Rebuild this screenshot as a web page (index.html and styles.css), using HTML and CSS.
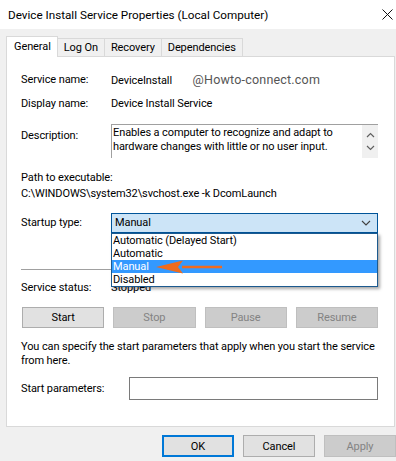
FILE: index.html
```html
<!DOCTYPE html>
<html lang="en">
<head>
    <meta charset="UTF-8">
    <meta name="viewport" content="width=device-width, initial-scale=1.0">
    <title>Device Install Service Properties (Local Computer)</title>
    <link rel="stylesheet" href="styles.css">
</head>
<body>
    <div class="window">
        <div class="titlebar">
            <span class="title">Device Install Service Properties (Local Computer)</span>
            <svg class="close" width="11" height="11" viewBox="0 0 11 11">
                <path d="M0.5 0.5 L10.5 10.5 M10.5 0.5 L0.5 10.5" stroke="#111" stroke-width="1" fill="none"/>
            </svg>
        </div>

        <div class="tabs">
            <div class="tab active">General</div>
            <div class="tab">Log On</div>
            <div class="tab">Recovery</div>
            <div class="tab">Dependencies</div>
        </div>

        <div class="panel">
            <div class="row first">
                <span class="label">Service name:</span>
                <span class="value">DeviceInstall <span class="watermark">@Howto-connect.com</span></span>
            </div>
            <div class="row">
                <span class="label">Display name:</span>
                <span class="value">Device Install Service</span>
            </div>
            <div class="row desc-row">
                <span class="label">Description:</span>
                <div class="desc-box">
                    <div class="desc-text">Enables a computer to recognize and adapt to hardware changes with little or no user input.</div>
                    <div class="scrollbar">
                        <svg width="9" height="6" viewBox="0 0 9 6"><path d="M1 5 L4.5 1.5 L8 5" stroke="#606060" stroke-width="1.2" fill="none"/></svg>
                        <svg width="9" height="6" viewBox="0 0 9 6"><path d="M1 1 L4.5 4.5 L8 1" stroke="#606060" stroke-width="1.2" fill="none"/></svg>
                    </div>
                </div>
            </div>
            <div class="path-label">Path to executable:</div>
            <div class="path-value">C:\WINDOWS\system32\svchost.exe -k DcomLaunch</div>

            <div class="row startup-row">
                <span class="label">Startup type:</span>
                <div class="combo">
                    <span>Manual</span>
                    <svg width="10" height="6" viewBox="0 0 10 6"><path d="M1 1 L5 5 L9 1" stroke="#404040" stroke-width="1.1" fill="none"/></svg>
                    <ul class="combo-list">
                        <li>Automatic (Delayed Start)</li>
                        <li>Automatic</li>
                        <li class="selected">Manual</li>
                        <li>Disabled</li>
                    </ul>
                    <svg class="pointer" width="68" height="14" viewBox="0 0 68 14">
                        <path d="M26 7 L66 7" stroke="#ee6b1f" stroke-width="2.5"/>
                        <path d="M0 7 L27 0.5 L22 7 L27 13.5 Z" fill="#ee6b1f"/>
                    </svg>
                </div>
            </div>

            <hr class="separator">

            <div class="row status-row">
                <span class="label">Service status:</span>
                <span class="value">Stopped</span>
            </div>

            <div class="service-buttons">
                <button class="btn">Start</button>
                <button class="btn" disabled>Stop</button>
                <button class="btn" disabled>Pause</button>
                <button class="btn" disabled>Resume</button>
            </div>

            <p class="hint">You can specify the start parameters that apply when you start the service from here.</p>

            <div class="params-row">
                <span class="label">Start parameters:</span>
                <div class="params-input"></div>
            </div>
        </div>

        <div class="actions">
            <button class="btn dlg default">OK</button>
            <button class="btn dlg">Cancel</button>
            <button class="btn dlg" disabled>Apply</button>
        </div>
    </div>
</body>
</html>
```

FILE: styles.css
```css
* {
    margin: 0;
    padding: 0;
    box-sizing: border-box;
}

html, body {
    overflow: hidden;
}

body {
    font-family: Roboto, 'Noto Sans', sans-serif;
    font-size: 11px;
    letter-spacing: -0.1px;
    color: #000;
    background: #f0f0f0;
}

.window {
    width: 402px;
    height: 461px;
    background: #f0f0f0;
}

.titlebar {
    height: 29px;
    background: #fff;
    display: flex;
    align-items: center;
    justify-content: space-between;
    padding: 0 9px 0 8px;
}

.title {
    font-size: 11.7px;
    letter-spacing: 0;
}

/* tabs */
.tabs {
    display: flex;
    align-items: flex-end;
    padding: 7px 0 0 6px;
    height: 27px;
    position: relative;
    z-index: 1;
}

.tab {
    height: 18px;
    padding: 0 6px;
    border: 1px solid #d9d9d9;
    border-bottom: none;
    border-left: none;
    line-height: 17px;
    background: #f0f0f0;
}

.tab.active {
    height: 21px;
    margin-bottom: -1px;
    background: #fff;
    border-left: 1px solid #d9d9d9;
    padding: 0 6px 0 7px;
    line-height: 19px;
}

/* panel */
.panel {
    margin: 0 7px 0 6px;
    height: 371px;
    background: #fff;
    border: 1px solid #d9d9d9;
    padding: 15px 16px 0 14px;
}

.row {
    display: flex;
    align-items: flex-start;
    line-height: 16px;
}

.row + .row {
    margin-top: 7px;
}

.label {
    width: 90px;
    flex-shrink: 0;
}

.value {
    white-space: nowrap;
}

.watermark {
    color: #555;
    margin-left: 18px;
    font-size: 12.5px;
    letter-spacing: 0.2px;
}

.desc-row.row {
    margin-top: 12px;
}

.desc-row .label {
    padding-top: 4px;
}

.desc-box {
    flex: 1;
    height: 34px;
    display: flex;
    border-top: 1px solid #a0a0a0;
    border-left: 1px solid #a0a0a0;
}

.desc-text {
    flex: 1;
    line-height: 14px;
    padding: 1px 0 0 1px;
}

.scrollbar {
    width: 16px;
    background: #f0f0f0;
    display: flex;
    flex-direction: column;
    align-items: center;
    justify-content: space-around;
    padding: 3px 0;
}

.path-label {
    margin-top: 12px;
    line-height: 16px;
}

.path-value {
    line-height: 16px;
}

.startup-row.row {
    margin-top: 11px;
}

.startup-row .label {
    padding-top: 2px;
}

.combo {
    flex: 1;
    height: 20px;
    position: relative;
    background: #cce4f7;
    border: 1px solid #005499;
    display: flex;
    align-items: center;
    justify-content: space-between;
    padding: 0 6px 0 3px;
}

.combo-list {
    position: absolute;
    top: 19px;
    left: -1px;
    right: -1px;
    list-style: none;
    background: #fff;
    border: 1px solid #1c5a8f;
    box-shadow: 2px 2px 3px rgba(0, 0, 0, 0.35);
    z-index: 2;
}

.combo-list li {
    height: 13px;
    line-height: 13px;
    padding-left: 1px;
}

.combo-list li.selected {
    background: #3399ff;
    color: #fff;
}

.pointer {
    position: absolute;
    left: 44px;
    top: 46px;
    z-index: 3;
}

.separator {
    border: none;
    border-top: 1px solid #a0a0a0;
    margin-top: 36px;
}

.status-row.row {
    margin-top: 10px;
}

/* buttons */
.btn {
    font-family: inherit;
    font-size: 11px;
    letter-spacing: -0.1px;
    height: 21px;
    background: #e1e1e1;
    border: 1px solid #adadad;
    color: #000;
}

.btn:disabled {
    background: #cccccc;
    border-color: #bfbfbf;
    color: #838383;
}

.service-buttons {
    display: grid;
    grid-template-columns: repeat(4, 1fr);
    gap: 9px;
    margin: 11px 0 0 1px;
}

.hint {
    margin-top: 12px;
    line-height: 14px;
}

.params-row {
    display: flex;
    align-items: center;
    margin-top: 9px;
}

.params-row .label {
    width: 108px;
}

.params-input {
    flex: 1;
    height: 23px;
    border: 1px solid #7a7a7a;
    background: #fff;
}

.actions {
    display: flex;
    justify-content: flex-end;
    gap: 9px;
    padding: 8px 6px 0 0;
}

.btn.dlg {
    width: 72px;
    height: 22px;
}

.btn.default {
    border: 2px solid #0078d7;
}
```
